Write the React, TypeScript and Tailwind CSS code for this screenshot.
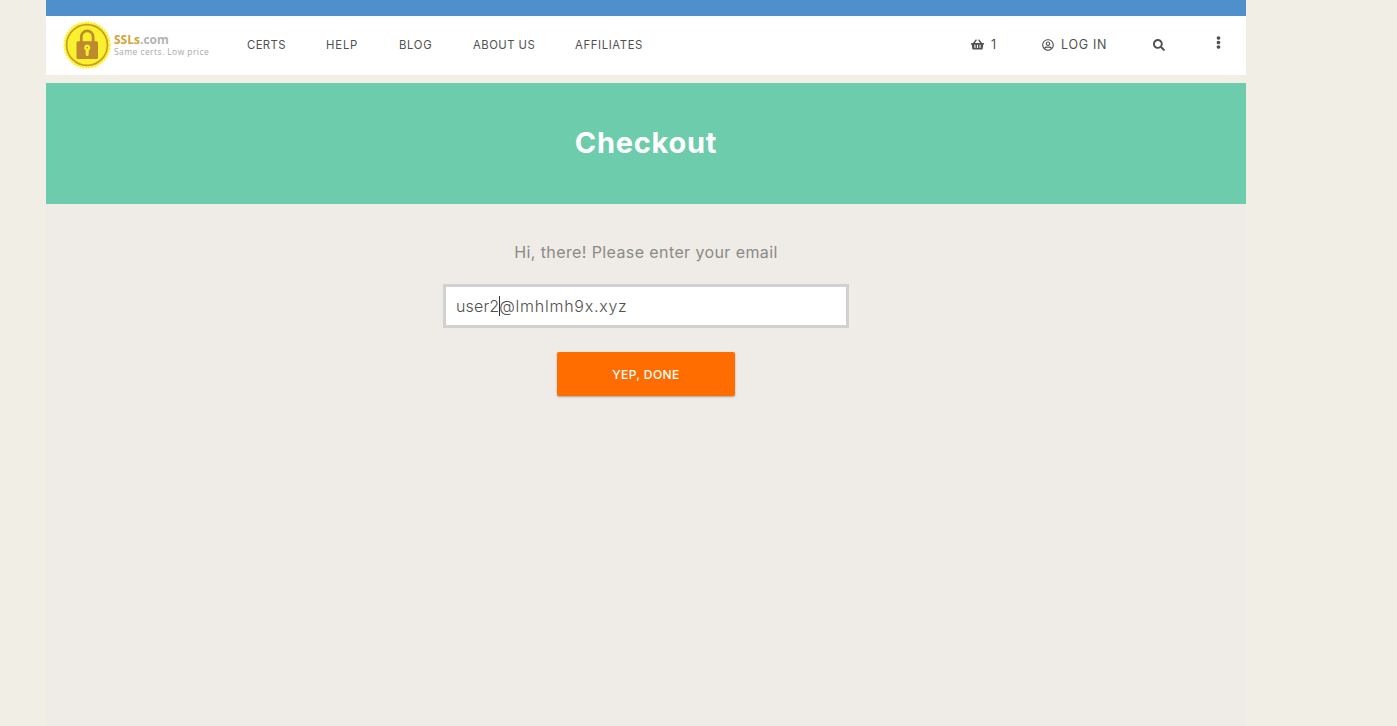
import { FaEllipsisV, FaRegUserCircle, FaSearch, FaShoppingBasket } from "react-icons/fa";

const links = [
  { label: "CERTS", box: "w-[39px] mr-[40px]", track: "tracking-[0.4px]" },
  { label: "HELP", box: "w-[33px] mr-[40px]", track: "tracking-[0.85px]" },
  { label: "BLOG", box: "w-[34px] mr-[40px]", track: "tracking-[0.7px]" },
  { label: "ABOUT US", box: "w-[62px] mr-[40px]", track: "tracking-[0.48px]" },
  { label: "AFFILIATES", box: "w-[68px]", track: "tracking-[0.62px]" },
];

function Seal() {
  return (
    <svg viewBox="0 0 48 48" className="h-12 w-12 shrink-0">
      <circle cx="24" cy="24" r="22.6" fill="#f9f12d" />
      <circle cx="24" cy="24" r="22.8" fill="none" stroke="#f9f12d" strokeWidth="1.8" strokeDasharray="1.8 1.184" />
      <circle cx="24" cy="24" r="20.4" fill="none" stroke="#c99a28" strokeWidth="1.6" />
      <path d="M18.3 21.5v-5.7a5.9 5.9 0 0 1 11.8 0v5.7" fill="none" stroke="#bd8a2e" strokeWidth="2.8" />
      <rect x="13.5" y="20.2" width="21.5" height="17.8" rx="1.5" fill="#bd8a2e" />
      <path d="M24.2 23.6a3.1 3.1 0 0 0-1.5 5.8v4.2a1.5 1.5 0 0 0 3 0v-4.2a3.1 3.1 0 0 0-1.5-5.8z" fill="#f9f12d" />
      <circle cx="24.2" cy="26.6" r="0.9" fill="#bd8a2e" />
    </svg>
  );
}

function Header() {
  return (
    <header className="flex h-[59px] items-center bg-white pb-[2px] pl-[17px] text-[#505050]">
      <a className="flex w-[184px] items-center gap-[3px]">
        <Seal />
        <span className="mt-[2px] flex flex-col whitespace-nowrap font-['Open_Sans',sans-serif]">
          <span className="text-[12px] leading-[12px] font-bold text-[#b3b3b3]">
            <span className="text-[#d2a536]">SSLs</span>.com
          </span>
          <span className="text-[8.5px] leading-[11px] tracking-[0.43px] text-[#a9a9a9]">Same certs. Low price</span>
        </span>
      </a>
      <nav className="flex text-[11.3px] leading-4">
        {links.map((l) => (
          <a key={l.label} className={`${l.box} ${l.track} whitespace-nowrap`}>{l.label}</a>
        ))}
      </nav>
      <div className="ml-auto flex items-center text-[12.5px] leading-4">
        <a className="flex w-[71px] items-center gap-[7px]"><FaShoppingBasket size={13} />1</a>
        <a className="flex w-[111px] items-center gap-[7px] whitespace-nowrap tracking-[0.7px]"><FaRegUserCircle size={12} />LOG IN</a>
        <FaSearch size={12} className="mr-[47px]" />
        <FaEllipsisV size={13} className="mr-[21px] mb-[5px]" />
      </div>
    </header>
  );
}

export default function App() {
  return (
    <div className="h-[726px] overflow-hidden bg-[#f1eee5] pl-[46px] font-[Inter,sans-serif]">
      <div className="flex h-full w-[1200px] flex-col">
        <div className="h-4 bg-[#4f8fcc]" />
        <Header />
        <section className="mt-2 flex h-[121px] items-center justify-center bg-[#6dccac] pb-px">
          <h1 className="text-[29px] leading-9 font-bold tracking-[0.75px] text-white">Checkout</h1>
        </section>
        <main className="flex flex-1 flex-col items-center bg-[#efebe6] pt-9">
          <p className="h-6 text-[16px] leading-6 tracking-[0.4px] text-[#8a8a87]">Hi, there! Please enter your email</p>
          <div className="mt-5 flex h-11 w-[406px] items-center border-[3px] border-[#d0d1d0] bg-white pl-[10px] text-[16px] font-light whitespace-nowrap text-[#505050]">
            <span className="tracking-[0.15px]">user2</span>
            <span className="-mr-px h-5 w-px bg-[#333]" />
            <span className="tracking-[0.75px]">@lmhlmh9x.xyz</span>
          </div>
          <button className="mt-6 h-11 w-[178px] rounded-[2px] bg-[#ff6c00] pt-px text-[12px] font-medium tracking-[0.4px] text-white shadow-[0_1px_2px_rgba(0,0,0,0.3)]">YEP, DONE</button>
        </main>
      </div>
    </div>
  );
}
